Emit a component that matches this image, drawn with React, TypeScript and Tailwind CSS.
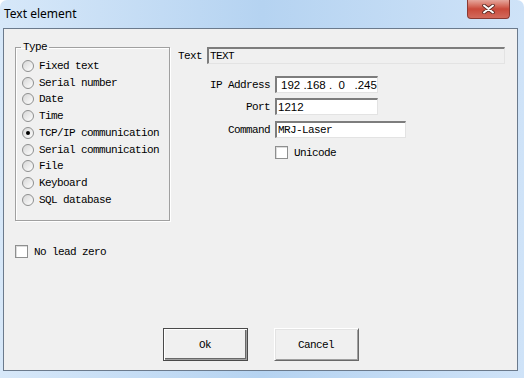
import React from "react";

const mono = "font-[family-name:'Liberation_Mono',monospace] text-[11px] tracking-[-0.6px] leading-[12px] text-black";
const sans = "font-[family-name:'Liberation_Sans',Arial,sans-serif] text-[11.5px] leading-[13px] text-black";

function Radio({ label, checked }: { label: string; checked?: boolean }) {
  return (
    <div className="flex items-center h-[16.75px]">
      <span className="w-[12px] h-[12px] rounded-full border border-[#8e8f8f] bg-gradient-to-br from-[#d6d6d6] to-white flex items-center justify-center">
        {checked && <span className="w-[4px] h-[4px] rounded-full bg-black" />}
      </span>
      <span className={`${mono} ml-[5px]`}>{label}</span>
    </div>
  );
}

function Checkbox({ label }: { label: string }) {
  return (
    <div className="flex items-center">
      <span className="w-[13px] h-[13px] border border-[#8e8f8f] bg-white shadow-[inset_1px_1px_0_#dcdcdc]" />
      <span className={`${mono} ml-[6px]`}>{label}</span>
    </div>
  );
}

function Field({ width, children, disabled }: { width: string; children?: React.ReactNode; disabled?: boolean }) {
  return (
    <div
      className={`${width} h-[17px] border-t-2 border-l-2 border-t-[#7d7d7d] border-l-[#7d7d7d] border-b border-r border-b-[#e3e3e3] border-r-[#e3e3e3] flex items-center pl-[1px] ${disabled ? "bg-[#f0f0f0]" : "bg-white"}`}
    >
      {children}
    </div>
  );
}

export default function App() {
  const types = [
    "Fixed text",
    "Serial number",
    "Date",
    "Time",
    "TCP/IP communication",
    "Serial communication",
    "File",
    "Keyboard",
    "SQL database",
  ];

  return (
    <div className="w-[525px] h-[378px] overflow-hidden bg-white">
      <div className="w-[524px] h-[378px] rounded-t-[7px] bg-gradient-to-r from-[#d7e8f9] via-[#b5d3f1] to-[#cfe3f8] flex flex-col px-[3px] pr-[6px]">
        {/* title bar */}
        <div className="h-[28px] flex items-start">
          <span className="font-[family-name:'Noto_Sans',sans-serif] text-[12px] leading-[16px] text-black mt-[6px] ml-[1px]">Text element</span>
          <div className="ml-auto mr-[8px] w-[43px] h-[19px] rounded-b-[4px] border border-t-0 border-[#8a3a33] bg-gradient-to-b from-[#e5a69c] via-[#c9493a] to-[#d26a5c] flex items-center justify-center">
            <svg width="13" height="10" viewBox="0 0 13 10">
              <path d="M2 1.5 L11 8.5 M11 1.5 L2 8.5" stroke="#5a2a24" strokeWidth="3.6" strokeLinecap="round" />
              <path d="M2 1.5 L11 8.5 M11 1.5 L2 8.5" stroke="#ffffff" strokeWidth="2" strokeLinecap="round" />
            </svg>
          </div>
        </div>

        {/* client area */}
        <div className="h-[343px] border border-[#6b7a8c] bg-[#f0f0f0] flex flex-col">
          <div className="flex items-start">
            <fieldset className="ml-[11px] mt-[12px] w-[155px] h-[180px] border border-[#a0a0a0] shadow-[1px_1px_0_#fff,inset_1px_1px_0_#fff] pl-[6px]">
              <legend className={`${mono} ml-[-1px] px-[2px]`}>Type</legend>
              <div className="pt-[4.5px]">
                {types.map((t) => (
                  <Radio key={t} label={t} checked={t === "TCP/IP communication"} />
                ))}
              </div>
            </fieldset>

            <div className="ml-[8px] mt-[18px] flex flex-col">
              <div className="flex items-center">
                <span className={`${mono} w-[24px]`}>Text</span>
                <span className="ml-[5px]">
                  <Field width="w-[298px]" disabled>
                    <span className={`${mono} text-[#8a8a8a]`}>TEXT</span>
                  </Field>
                </span>
              </div>

              <div className="flex items-center mt-[12px]">
                <span className={`${mono} w-[92px] text-right`}>IP Address</span>
                <span className="ml-[5px]">
                  <Field width="w-[103px]">
                    <span className={`${sans} whitespace-pre pl-[3px]`}>192 .168 .  0   .245</span>
                  </Field>
                </span>
              </div>

              <div className="flex items-center mt-[5px]">
                <span className={`${mono} w-[92px] text-right`}>Port</span>
                <span className="ml-[5px]">
                  <Field width="w-[103px]">
                    <span className={sans}>1212</span>
                  </Field>
                </span>
              </div>

              <div className="flex items-center mt-[6px]">
                <span className={`${mono} w-[92px] text-right`}>Command</span>
                <span className="ml-[5px]">
                  <Field width="w-[131px]">
                    <span className={mono}>MRJ-Laser</span>
                  </Field>
                </span>
              </div>

              <div className="ml-[97px] mt-[8px]">
                <Checkbox label="Unicode" />
              </div>
            </div>
          </div>

          <div className="ml-[11px] mt-[24px]">
            <Checkbox label="No lead zero" />
          </div>

          <div className="mt-auto mb-[9px] flex justify-center gap-[26px]">
            <button className="w-[85px] h-[33px] bg-[#f0f0f0] border border-[#4a4a4a] shadow-[inset_1px_1px_0_#fff,inset_-1px_-1px_0_#a0a0a0,inset_-2px_-2px_0_#696969] flex items-center justify-center">
              <span className={mono}>Ok</span>
            </button>
            <button className="w-[85px] h-[33px] bg-[#f0f0f0] border border-t-white border-l-white border-b-[#696969] border-r-[#696969] shadow-[inset_1px_1px_0_#e3e3e3,inset_-1px_-1px_0_#a0a0a0] flex items-center justify-center">
              <span className={mono}>Cancel</span>
            </button>
          </div>
        </div>
      </div>
    </div>
  );
}
